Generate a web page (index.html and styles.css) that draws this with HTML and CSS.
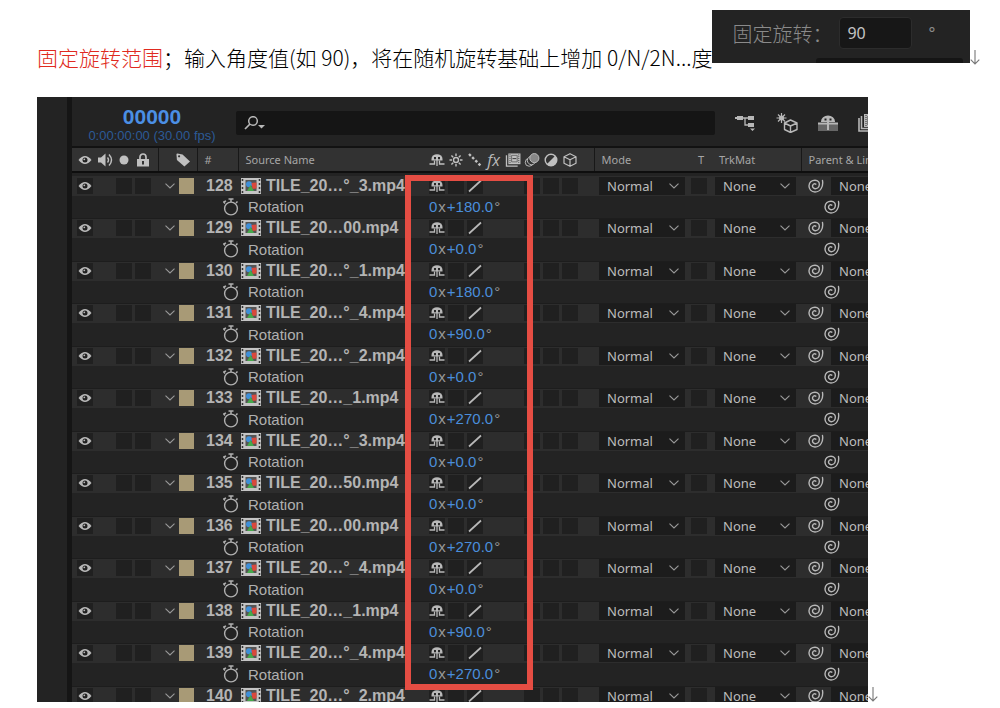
FILE: index.html
```
<!DOCTYPE html>
<html lang="zh-CN">
<head>
    <meta charset="UTF-8">
    <meta name="viewport" content="width=device-width, initial-scale=1.0">
    <title>固定旋转范围</title>
    <link rel="stylesheet" href="styles.css">
</head>
<body>
    <!-- shared icons -->
    <svg class="sprite" aria-hidden="true">
        <symbol id="eye" viewBox="0 0 14 10">
            <path d="M0.500 5Q7-3 13.500 5Q7 13 0.500 5Z" fill="currentColor"/>
            <circle cx="7" cy="5" r="2.500" fill="#222"/>
            <circle cx="6.300" cy="4.300" r="0.900" fill="currentColor"/>
        </symbol>
        <symbol id="speaker" viewBox="0 0 16 14">
            <path d="M0 4.500h3L7.500 0.500v13L3 9.500H0z" fill="currentColor"/>
            <path d="M9.500 4.500q2 2.500 0 5M11 1.500q5 5.500 0 11" fill="none" stroke="currentColor" stroke-width="1.400"/>
        </symbol>
        <symbol id="dot" viewBox="0 0 10 10"><circle cx="5" cy="5" r="4.500" fill="currentColor"/></symbol>
        <symbol id="lock" viewBox="0 0 12 14">
            <path d="M3 6.500V4a3 3 0 0 1 6 0v2.500" fill="none" stroke="currentColor" stroke-width="1.700"/>
            <path d="M0 6h12v7.500H0z" fill="currentColor"/>
            <path d="M5 8h2v3.500H5z" fill="#333"/>
        </symbol>
        <symbol id="tag" viewBox="0 0 16 15">
            <path d="M1 1.500Q1 0.500 2 0.500L7.500 1.500L15.500 9L9.500 14.500L1.500 7.500Z" fill="currentColor"/>
            <circle cx="3.800" cy="3.500" r="1.200" fill="#333"/>
        </symbol>
        <symbol id="chevron" viewBox="0 0 10 6"><path d="M0.500 0.700L5 5L9.500 0.700" fill="none" stroke="currentColor" stroke-width="1.100"/></symbol>
        <symbol id="film" viewBox="0 0 20 16">
            <path d="M0 0h20v16H0z" fill="#c4c4c4"/>
            <path d="M4.500 2h11v11h-11z" fill="#555"/>
            <path d="M1.500 1v14M18.500 1v14" stroke="#333" stroke-width="1.500" stroke-dasharray="2 2"/>
            <circle cx="8" cy="6.200" r="3" fill="#3f8fd8"/>
            <path d="M10.500 5l5-0.500v6l-4 0.500z" fill="#d9493c"/>
            <path d="M9.500 7l3.500 6H6z" fill="#46a84b"/>
        </symbol>
        <symbol id="watch" viewBox="0 0 16 18">
            <circle cx="8" cy="10.500" r="6.400" fill="none" stroke="currentColor" stroke-width="1.400"/>
            <path d="M8 4V1M5.500 1h5M2 5.500L0.800 4L3 2.800M13 5l1.500-1.500" fill="none" stroke="currentColor" stroke-width="1.500"/>
        </symbol>
        <symbol id="shy" viewBox="0 0 16 13">
            <path d="M2.500 7V5.500a5.500 4.800 0 0 1 11 0V7z" fill="currentColor"/>
            <path d="M5 3.500h2v2.200H5zM9 3.500h2v2.200H9z" fill="#282828"/>
            <path d="M8 6v6.500M0.500 10.500h5V7M10.500 7v3.500h5" fill="none" stroke="currentColor" stroke-width="1.300"/>
        </symbol>
        <symbol id="sun" viewBox="0 0 14 14">
            <circle cx="7" cy="7" r="2.500" fill="none" stroke="currentColor" stroke-width="1.400"/>
            <path d="M7 0.500v2.500M7 11v2.500M0.500 7H3M11 7h2.500M2.400 2.400l1.800 1.800M9.800 9.800l1.800 1.800M2.400 11.600l1.800-1.800M9.800 4.200l1.800-1.800" stroke="currentColor" stroke-width="1.400"/>
        </symbol>
        <symbol id="dots" viewBox="0 0 14 14"><path d="M1 1L13 13" stroke="currentColor" stroke-width="2.400" stroke-dasharray="2.600 1.900"/></symbol>
        <symbol id="slash" viewBox="0 0 14 12"><path d="M1 11.500L13 0.500" stroke="currentColor" stroke-width="1.700"/></symbol>
        <symbol id="frames" viewBox="0 0 16 15">
            <path d="M1 2.500V14h12" fill="none" stroke="currentColor" stroke-width="1.400"/>
            <path d="M3 0.500h13v11.500H3z" fill="currentColor"/>
            <path d="M4.800 1.500v10M14.200 1.500v10" stroke="#333" stroke-width="1" stroke-dasharray="1 1"/>
            <path d="M6.500 2.500h6v7h-6z" fill="none" stroke="#666"/>
            <path d="M7.500 6h4" stroke="#333"/>
        </symbol>
        <symbol id="blur" viewBox="0 0 16 15">
            <circle cx="5" cy="10" r="4.200" fill="none" stroke="currentColor"/>
            <circle cx="7.500" cy="8" r="4.500" fill="#333" stroke="currentColor"/>
            <circle cx="10.500" cy="5.500" r="4.900" fill="#888" stroke="currentColor"/>
        </symbol>
        <symbol id="adjust" viewBox="0 0 14 14">
            <circle cx="7" cy="7" r="5.800" fill="none" stroke="currentColor" stroke-width="1.400"/>
            <path d="M11.200 2.800A5.900 5.900 0 0 1 2.800 11.200z" fill="currentColor"/>
        </symbol>
        <symbol id="cube" viewBox="0 0 14 14"><path d="M7 0.700L13 3.700V10.300L7 13.300L1 10.300V3.700ZM1 3.700L7 6.700L13 3.700M7 6.700V13.300" fill="none" stroke="currentColor" stroke-width="1.200" stroke-linejoin="round"/></symbol>
        <symbol id="whip" viewBox="0 0 16 14"><path d="M14.500 1.500C15.500 7.500 12.500 13 7 13C3.200 13 0.900 10 1 6.800C1.200 3.200 4 1.200 7 1.200C10.200 1.200 11.600 3.600 11.300 5.800C11 8.300 9 9.900 7 9.700C5 9.500 4.200 7.800 4.700 6.200C5.200 4.900 6.600 4.400 7.800 5.200" fill="none" stroke="currentColor" stroke-width="1.400" stroke-linecap="round"/></symbol>
        <symbol id="return" viewBox="0 0 10 15"><path d="M5 0v14M0.700 9.700L5 14L9.300 9.700" fill="none" stroke="currentColor" stroke-width="1.100"/></symbol>
    </svg>

    <header class="intro">
        <p class="note"><span class="key">固定旋转范围</span>；输入角度值(如 90)，将在随机旋转基础上增加 0/N/2N...度</p>
        <div class="setting">
            <div class="field">
                <label for="angle">固定旋转：</label>
                <input type="text" id="angle" value="90">
                <span class="degree">°</span>
            </div>
            <div class="next-field"></div>
        </div>
        <svg class="return"><use href="#return"/></svg>
    </header>

    <main class="figure">
        <section class="panel">
            <div class="gutter"></div>
            <div class="timeline">
                <div class="toolbar">
                    <div class="time">
                        <div class="frame">00000</div>
                        <div class="timecode">0:00:00:00 (30.00 fps)</div>
                    </div>
                    <div class="search">
                        <svg class="search-icon" viewBox="0 0 22 14"><circle cx="9" cy="5" r="4.300" fill="none" stroke="currentColor" stroke-width="1.500"/><path d="M6 8L1 13" stroke="currentColor" stroke-width="1.700"/><path d="M14 9h7l-3.500 3.500z" fill="currentColor"/></svg>
                        <input type="text" aria-label="Search">
                    </div>
                    <div class="tools">
                        <button aria-label="Mini flowchart"><svg viewBox="0 0 22 18"><path d="M2 4h16M10 4v7h6" fill="none" stroke="currentColor" stroke-width="1.300"/><path d="M2 2h6v4H2zM13 2h6v4h-6zM13 9h6v4h-6zM0 3h2v2H0zM15 14.500h5L17.500 17z" fill="currentColor"/></svg></button>
                        <button aria-label="Draft 3D"><svg viewBox="0 0 22 20"><path d="M5.500 0v10M0.500 5h10M2 1.500l7 7M9 1.500l-7 7" stroke="currentColor" stroke-width="1.200"/><circle cx="5.500" cy="5" r="2.500" fill="currentColor"/><path d="M14.500 7L21 10V16.500L14.500 19.500L8.500 16.500V10ZM8.500 10L14.500 13L21 10M14.500 13V19.500" fill="#222" stroke="currentColor" stroke-width="1.400" stroke-linejoin="round"/></svg></button>
                        <button aria-label="Hide shy layers"><svg viewBox="0 0 22 18"><path d="M1 10h20v7H1z" fill="#666"/><path d="M4 8V7.500a7 6 0 0 1 14 0V8z" fill="currentColor"/><path d="M7.500 4.500h2v2h-2zM12.500 4.500h2v2h-2z" fill="#222"/><path d="M1 9.500h20M11 8v8" stroke="currentColor" stroke-width="2"/></svg></button>
                        <button aria-label="Frame blending"><svg viewBox="0 0 22 18"><path d="M1 4v13h16M3.500 2v12.500H18" fill="none" stroke="currentColor" stroke-width="1.600"/><path d="M6 0h16v13H6z" fill="currentColor"/><path d="M8 1v11" stroke="#333" stroke-dasharray="1 1"/><path d="M10 2h9v9h-9zM12 6.500h5" fill="none" stroke="#444"/></svg></button>
                    </div>
                </div>

                <div class="sheet">
                    <table>
                        <colgroup>
                            <col class="c-eye"><col class="c-small"><col class="c-small"><col class="c-lock">
                            <col class="c-twirl"><col class="c-tag"><col class="c-num"><col class="c-name">
                            <col class="c-sw" span="8"><col class="c-gap"><col class="c-mode"><col class="c-t">
                            <col class="c-mat"><col>
                        </colgroup>
                        <thead>
                            <tr>
                                <th><svg class="i-eye"><use href="#eye"/></svg></th>
                                <th><svg class="i-speaker"><use href="#speaker"/></svg></th>
                                <th><svg class="i-dot"><use href="#dot"/></svg></th>
                                <th class="lock-cell"><svg class="i-lock"><use href="#lock"/></svg></th>
                                <th class="sep tag" colspan="2"><svg class="i-speaker"><use href="#tag"/></svg></th>
                                <th class="sep text">#</th>
                                <th class="sep text">Source Name</th>
                                <th><svg class="i-shy"><use href="#shy"/></svg></th>
                                <th><svg class="i-sq"><use href="#sun"/></svg></th>
                                <th><svg class="i-sq"><use href="#dots"/></svg></th>
                                <th class="fx">fx</th>
                                <th><svg class="i-shy"><use href="#frames"/></svg></th>
                                <th><svg class="i-shy"><use href="#blur"/></svg></th>
                                <th><svg class="i-sq"><use href="#adjust"/></svg></th>
                                <th><svg class="i-sq"><use href="#cube"/></svg></th>
                                <th></th>
                                <th class="sep text">Mode</th>
                                <th class="text">T</th>
                                <th class="text">TrkMat</th>
                                <th class="sep text">Parent &amp; Link</th>
                            </tr>
                        </thead>
                        <tbody id="layers"></tbody>
                    </table>
                    <div class="highlight"></div>
                </div>
            </div>
        </section>
        <svg class="return"><use href="#return"/></svg>
    </main>

    <script src="layers.js"></script>
</body>
</html>
```
FILE: styles.css
```
* {
    box-sizing: border-box;
}
body {
    margin: 0;
    height: 100vh;
    display: flex;
    flex-direction: column;
    padding: 10px 0 6px 37px;
    background-color: white;
    font-family: "Noto Sans", "Noto Sans CJK SC", sans-serif;
    overflow: hidden;
}
svg {
    display: block;
    flex: none;
}
button {
    padding: 0;
    border: none;
    background: none;
    color: inherit;
}
.sprite {
    position: absolute;
    width: 0;
    height: 0;
}

/* text line with the setting next to it */
.intro {
    display: flex;
    align-items: flex-end;
    margin-bottom: 27px;
}
.note {
    flex: none;
    margin: 0;
    font-family: "Noto Sans CJK SC", sans-serif;
    font-size: 21px;
    font-weight: 300;
    line-height: 26px;
    color: #000;
    white-space: nowrap;
}
.key {
    color: #e02a20;
}
.setting {
    width: 258px;
    margin-bottom: 7px;
    padding-top: 7px;
    background-color: #232323;
}
.field {
    display: flex;
    align-items: center;
    height: 32px;
    padding-left: 20px;
}
.field label {
    width: 107px;
    font-family: "Noto Sans CJK SC", sans-serif;
    font-size: 20px;
    font-weight: 300;
    color: #8a8a8a;
    white-space: nowrap;
}
.field input {
    width: 73px;
    height: 32px;
    padding: 0 7px;
    border: 1px solid #2c2c2c;
    border-radius: 4px;
    background-color: #171717;
    font: 16px "Noto Sans", sans-serif;
    color: #c4c4c4;
}
.degree {
    margin-left: 16px;
    font-size: 16px;
    color: #8a8a8a;
}
.next-field {
    height: 5px;
    margin: 9px 7px 0 104px;
    border-radius: 3px 3px 0 0;
    background-color: #151515;
}
.return {
    width: 10px;
    height: 15px;
    color: #777;
}
.intro .return {
    margin-bottom: 5px;
}

/* timeline panel */
.figure {
    flex: 1;
    min-height: 0;
    display: flex;
    align-items: flex-end;
    margin-right: 122px;
}
.panel {
    flex: 1;
    min-width: 0;
    height: 100%;
    display: flex;
    overflow: hidden;
    background-color: #232323;
    color: #b8b8b8;
}
.gutter {
    flex: none;
    width: 35px;
    border-right: 5px solid #151515;
}
.timeline {
    flex: 1;
    min-width: 0;
}
.toolbar {
    display: flex;
    align-items: center;
    height: 51px;
    padding-top: 2px;
    border-bottom: 2px solid #121212;
}
.time {
    width: 164px;
    padding: 4px 6px 0 2px;
    text-align: center;
    font-family: "Liberation Sans", sans-serif;
    white-space: nowrap;
}
.frame {
    font-size: 21px;
    font-weight: bold;
    line-height: 22px;
    color: #4b8fe4;
}
.timecode {
    font-size: 13px;
    line-height: 16px;
    color: #2c5a96;
}
.search {
    flex: 1;
    display: flex;
    align-items: center;
    height: 24px;
    padding-left: 8px;
    border-radius: 2px;
    background-color: #151515;
}
.search-icon {
    width: 22px;
    height: 14px;
}
.search input {
    flex: 1;
    min-width: 0;
    border: none;
    background: none;
    color: inherit;
}
.tools {
    display: flex;
    gap: 19px;
    width: 153px;
    padding-left: 20px;
    overflow: hidden;
}
.tools svg {
    width: 22px;
    height: 20px;
}

/* layer list */
.sheet {
    position: relative;
}
table {
    width: 100%;
    table-layout: fixed;
    border-collapse: collapse;
}
.c-eye, .c-lock { width: 25px; }
.c-small { width: 18px; }
.c-twirl { width: 20px; }
.c-tag { width: 19px; }
.c-num { width: 41px; }
.c-name { width: 189px; }
.c-sw { width: 19px; }
.c-gap { width: 15px; }
.c-mode { width: 97px; }
.c-t { width: 21px; }
.c-mat { width: 89px; }
th, td {
    padding: 0;
    white-space: nowrap;
    overflow: hidden;
}
th {
    height: 24px;
    background-color: #323232;
    border-bottom: 2px solid #0e0e0e;
    font-size: 11px;
    font-weight: normal;
    color: #a6a6a6;
}
th svg, td svg {
    margin: 0 auto;
}
.sep {
    border-left: 1px solid #181818;
}
.text {
    padding-left: 7px;
    text-align: left;
}
.tag {
    padding-left: 10px;
}
.fx {
    font: italic 16px "Open Sans", sans-serif;
    line-height: 18px;
    color: #b8b8b8;
}
th svg {
    color: #c0c0c0;
}
.i-eye { width: 14px; height: 10px; }
.i-speaker { width: 16px; height: 14px; }
.i-dot { width: 10px; height: 10px; }
.i-lock { width: 12px; height: 14px; }
.i-shy { width: 16px; height: 14px; }
.i-sq { width: 14px; height: 14px; }
.i-chevron { width: 10px; height: 6px; color: #999; }
.i-film { width: 20px; height: 16px; }
.i-watch { width: 16px; height: 18px; }
tbody::before {
    content: "";
    display: table-row;
    height: 4px;
}
.layer td {
    height: 20px;
    background-color: #2d2d2d;
}
.property td {
    height: 22px;
    background-color: #232323;
    border-bottom: 1px solid #1d1d1d;
}
.property.tall td {
    height: 23px;
}
.box {
    display: flex;
    align-items: center;
    width: 16px;
    height: 16px;
    margin: 0 auto;
    background-color: #202020;
}
.lock-cell {
    padding-right: 5px;
}
.swatch {
    width: 15px;
    height: 16px;
    margin-left: 1px;
    background-color: #a89a76;
}
.twirl {
    display: block;
    margin-left: auto;
    padding-right: 3px;
}
.num, .name {
    font-family: "Liberation Sans", sans-serif;
    font-size: 16px;
    font-weight: bold;
    line-height: 18px;
    color: #b4b4b4;
}
.num {
    padding-left: 9px;
}
.name-line {
    display: flex;
    align-items: center;
    gap: 5px;
    padding-left: 3px;
}
.name-line svg {
    margin: 0;
}
.prop-line {
    display: flex;
    align-items: center;
    gap: 9px;
    padding-left: 26px;
    font-family: "Liberation Sans", sans-serif;
    font-size: 15px;
    line-height: 21px;
    color: #b0b0b0;
}
.prop-line svg {
    margin: 0;
}
.value {
    padding-left: 2px;
    font-family: "Liberation Sans", sans-serif;
    font-size: 15px;
    line-height: 20px;
    color: #4a8edb;
}
.value small {
    padding: 0 1px;
    font-size: 15px;
    color: #999;
}
.drop {
    display: grid;
    align-items: center;
    height: 18px;
    margin: 0 6px 0 5px;
    background-color: #1c1c1c;
}
.drop select, .drop svg {
    grid-area: 1 / 1;
}
.drop select {
    width: 100%;
    height: 18px;
    padding: 0 0 0 8px;
    border: none;
    appearance: none;
    background: none;
    font: 13px "Noto Sans", sans-serif;
    line-height: 18px;
    color: #bcbcbc;
}
.drop svg {
    margin: 0 6px 0 auto;
    pointer-events: none;
}
.matte .drop {
    margin: 0 5px 0 3px;
}
.t-cell .box {
    margin: 0;
}
.parent {
    display: flex;
    align-items: center;
    padding-left: 7px;
}
.parent > svg {
    margin: 0;
}
.parent .drop {
    flex: none;
    width: 96px;
    margin: 0 0 0 7px;
}
.property .parent {
    padding-left: 23px;
}
.highlight {
    position: absolute;
    top: 27px;
    left: 333px;
    width: 128px;
    height: 515px;
    border: 6px solid #e54d43;
    pointer-events: none;
}
```
FILE: layers.js
```
const layers = [
    { id: 128, name: "TILE_20…°_3.mp4", angle: 180 },
    { id: 129, name: "TILE_20…00.mp4", angle: 0 },
    { id: 130, name: "TILE_20…°_1.mp4", angle: 180 },
    { id: 131, name: "TILE_20…°_4.mp4", angle: 90 },
    { id: 132, name: "TILE_20…°_2.mp4", angle: 0 },
    { id: 133, name: "TILE_20…_1.mp4", angle: 270 },
    { id: 134, name: "TILE_20…°_3.mp4", angle: 0 },
    { id: 135, name: "TILE_20…50.mp4", angle: 0 },
    { id: 136, name: "TILE_20…00.mp4", angle: 270 },
    { id: 137, name: "TILE_20…°_4.mp4", angle: 0 },
    { id: 138, name: "TILE_20…_1.mp4", angle: 90 },
    { id: 139, name: "TILE_20…°_4.mp4", angle: 270 },
    { id: 140, name: "TILE_20…°_2.mp4" }
];

function icon(name, size) {
    return `<svg class="i-${size || name}"><use href="#${name}"/></svg>`;
}

function box(label, content, cell) {
    return `<td class="${cell || ""}"><button class="box" aria-label="${label}">${content || ""}</button></td>`;
}

function drop(label, value) {
    return `<div class="drop"><select aria-label="${label}"><option>${value}</option></select>${icon("chevron")}</div>`;
}

function propertyRow(layer, index) {
    // a layer without an angle has no open property
    if (layer.angle === undefined) {
        return "";
    }
    return `<tr class="property${index % 2 ? " tall" : ""}">
        <td colspan="6"></td>
        <td colspan="2"><div class="prop-line">${icon("watch")}<span>Rotation</span></div></td>
        <td class="value" colspan="12">0<small>x</small>+${layer.angle}.0<small>°</small></td>
        <td><div class="parent">${icon("whip", "shy")}</div></td>
    </tr>`;
}

function layerRows(layer, index) {
    return `<tr class="layer">
        ${box("Video", icon("eye"))}
        <td></td>
        ${box("Solo")}
        ${box("Lock", "", "lock-cell")}
        <td><button class="twirl" aria-label="Collapse">${icon("chevron")}</button></td>
        <td><div class="swatch"></div></td>
        <td class="num">${layer.id}</td>
        <td class="name"><div class="name-line">${icon("film")}<span>${layer.name}</span></div></td>
        ${box("Shy", icon("shy"))}
        ${box("Collapse transformations")}
        ${box("Quality", icon("slash", "sq"))}
        <td></td>
        <td></td>
        ${box("Motion blur")}
        ${box("Adjustment layer")}
        ${box("3D layer")}
        <td></td>
        <td>${drop("Mode", "Normal")}</td>
        <td class="t-cell"><button class="box" aria-label="Preserve transparency"></button></td>
        <td class="matte">${drop("TrkMat", "None")}</td>
        <td><div class="parent">${icon("whip", "shy")}${drop("Parent", "None")}</div></td>
    </tr>` + propertyRow(layer, index);
}

document.getElementById("layers").innerHTML = layers.map(layerRows).join("");
```
